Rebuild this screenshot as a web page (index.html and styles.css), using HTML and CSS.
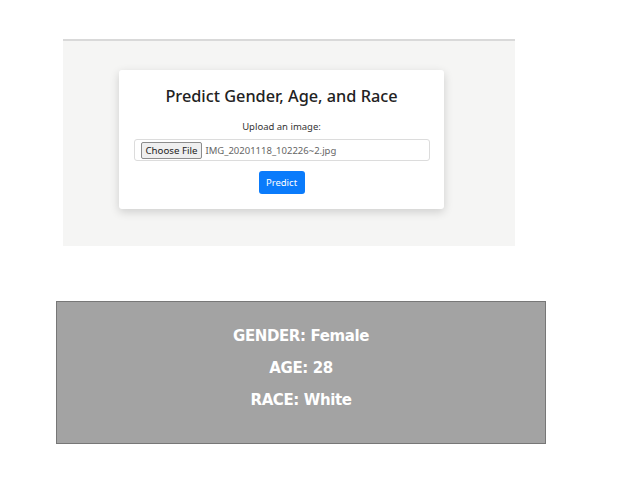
FILE: index.html
```html
<!DOCTYPE html>
<html>
<head>
<meta charset="utf-8">
<link rel="stylesheet" href="styles.css">
</head>
<body>
<div class="shot">
  <div class="card">
    <h1 class="title">Predict Gender, Age, and Race</h1>
    <div class="label">Upload an image:</div>
    <div class="file">
      <span class="choose">Choose File</span>
      <span class="fname">IMG_20201118_102226~2.jpg</span>
    </div>
    <div class="actions"><span class="predict">Predict</span></div>
  </div>
</div>
<div class="result">
  <div class="line">GENDER: Female</div>
  <div class="line">AGE: 28</div>
  <div class="line">RACE: White</div>
</div>
</body>
</html>
```
FILE: styles.css
```css
html, body { margin: 0; padding: 0; background: #fff; }
body { font-family: "Noto Sans", "Open Sans", sans-serif; }
.shot {
  margin: 39px 0 0 63px;
  width: 452px;
  height: 207px;
  border-top: 2px solid #d9d9d9;
  background: #f5f5f4;
  padding-top: 29px;
  box-sizing: border-box;
}
.card {
  margin-left: 56px;
  width: 325px;
  height: 139px;
  background: #fff;
  border-radius: 3px;
  box-shadow: 0 3px 10px rgba(0,0,0,0.16);
  box-sizing: border-box;
  padding-top: 14px;
  display: flex;
  flex-direction: column;
  align-items: center;
}
.title {
  margin: 0;
  font-size: 16.3px;
  font-weight: 500;
  color: #222;
  line-height: 24px;
}
.label {
  margin-top: 12px;
  font-size: 9.5px;
  color: #333;
  line-height: 14px;
}
.file {
  margin-top: 5px;
  width: 296px;
  height: 22px;
  border: 1px solid #dcdcdc;
  border-radius: 3px;
  box-sizing: border-box;
  display: flex;
  align-items: center;
  padding-left: 6px;
  gap: 3px;
}
.choose {
  height: 17px;
  line-height: 15px;
  box-sizing: border-box;
  border: 1px solid #8c8c8c;
  background: #efefef;
  border-radius: 2px;
  padding: 0 4px;
  font-size: 9.7px;
  color: #222;
}
.fname { font-size: 9.5px; color: #666; }
.actions { margin-top: 8px; }
.predict {
  display: inline-block;
  width: 46px;
  height: 23px;
  line-height: 23px;
  text-align: center;
  background: #0a7bfb;
  color: #fff;
  border-radius: 3px;
  font-size: 9.5px;
}
.result {
  margin: 55px 0 0 56px;
  width: 490px;
  height: 143px;
  box-sizing: border-box;
  background: #a3a3a3;
  border: 1px solid #777;
  padding-top: 18px;
  display: flex;
  flex-direction: column;
  align-items: center;
}
.line {
  font-family: "DejaVu Sans", sans-serif;
  font-weight: bold;
  font-size: 15px;
  color: #fff;
  line-height: 32px;
  letter-spacing: -0.4px;
}
```
